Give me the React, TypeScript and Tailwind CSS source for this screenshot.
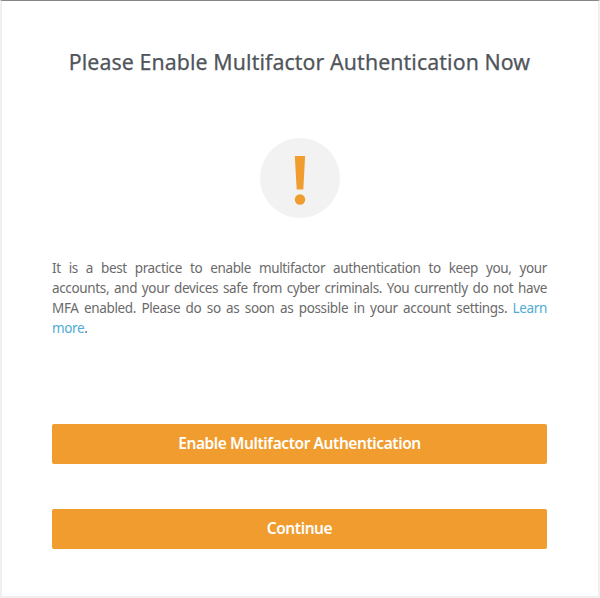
export default function App() {
  return (
    <main className="h-[598px] w-[600px] border-x-2 border-b-2 border-t border-x-[#efefef] border-b-[#efefef] border-t-[#858585] bg-white pl-[50px] pr-[51px] font-['Noto_Sans','Open_Sans',sans-serif] text-[#6a6a6a]">
      <h1 className="mt-[46px] whitespace-nowrap text-center text-[21.3px] font-normal leading-[30px] tracking-[0.1px] text-[#50555b] [-webkit-text-stroke:0.25px_#50555b]">Please Enable Multifactor Authentication Now</h1>
      <div className="mx-auto mt-[61px] flex h-20 w-20 items-center justify-center rounded-full bg-[#f2f2f2]">
        <svg className="mt-1" width="12" height="50" viewBox="0 0 12 50" fill="#f09c2e"><path d="M.8 1h10.3L9.3 34.5H2.7z" /><circle cx="6" cy="44.5" r="5.2" /></svg>
      </div>
      <p className="mt-10 text-justify text-[13.5px] leading-5 tracking-[-0.35px]">
        It is a best practice to enable multifactor authentication to keep you, your accounts, and your devices safe from cyber criminals. You currently do not have MFA enabled. Please do so as soon as possible in your account settings. <a className="text-[#4fabd5]">Learn more</a>.
      </p>
      <button className="mt-[86px] block h-10 w-full rounded-[2px] bg-[#f09c2e] pb-0.5 text-[15.5px] font-semibold leading-6 tracking-[-0.42px] text-white">Enable Multifactor Authentication</button>
      <button className="mt-[45px] block h-10 w-full rounded-[2px] bg-[#f09c2e] pb-0.5 text-[15.5px] font-semibold leading-6 tracking-[-0.42px] text-white">Continue</button>
    </main>
  );
}
